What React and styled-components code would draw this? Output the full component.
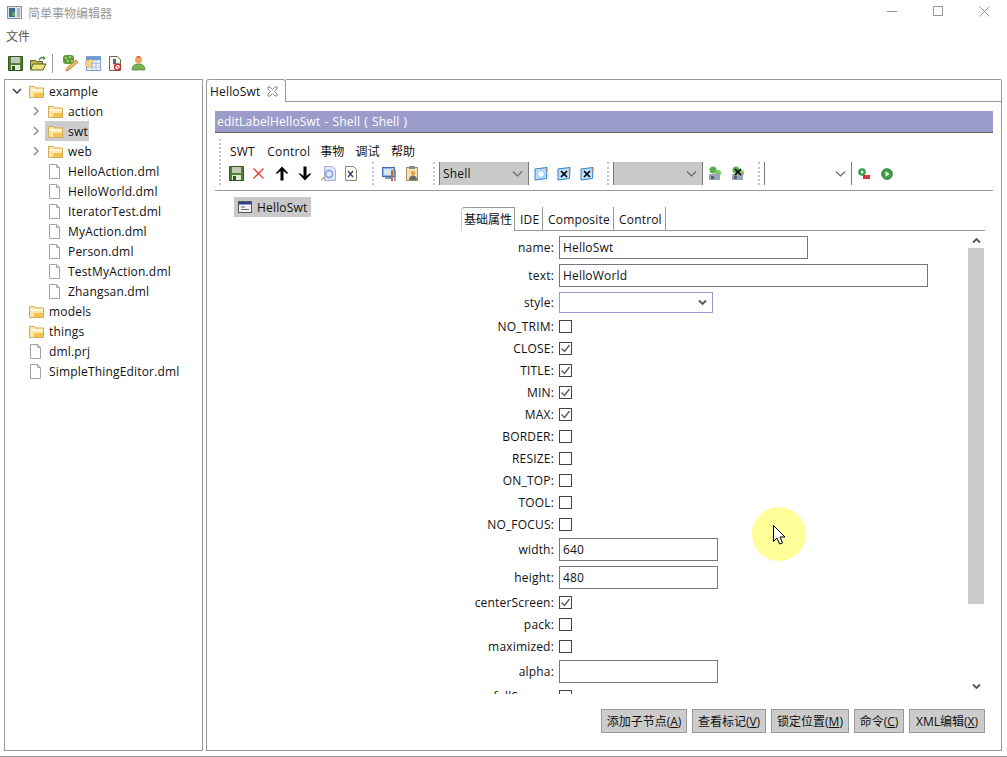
import React from 'react';
import styled, { createGlobalStyle } from 'styled-components';

const Global = createGlobalStyle`
  html, body { margin: 0; padding: 0; background: #fff; }
  body { font-family: "Open Sans", "Noto Sans CJK SC", sans-serif; font-size: 12px; color: #111; letter-spacing: .18px; }
  * { box-sizing: border-box; }
`;

const Win = styled.div`
  position: relative; width: 1007px; height: 757px; overflow: hidden; background: #fff;
  display: flex; flex-direction: column; border-bottom: 1px solid #999;
`;
const TitleBar = styled.div`display: flex; align-items: center; height: 25px; padding-left: 7px; flex: none;`;
const TitleText = styled.div`margin-left: 6px; color: #999; font-size: 12px; flex: 1; letter-spacing: 0;`;
const WinBtn = styled.div`width: 46px; height: 23px; align-self: flex-start; display: flex; align-items: center; justify-content: center;`;
const MenuBar = styled.div`height: 22px; padding-left: 6px; display: flex; align-items: center; color: #555; flex: none; letter-spacing: 0;`;
const AppBar = styled.div`height: 28px; padding-left: 8px; display: flex; align-items: center; flex: none; margin-top: 2px;`;
const AppBtn = styled.div`width: ${p => p.$w}px; flex: none; display: flex; align-items: center; justify-content: flex-start;`;
const AppSep = styled.div`width: 1px; height: 19px; background: #999; margin: 0 9px 0 5px;`;
const Panels = styled.div`display: flex; flex: 1; min-height: 0; padding: 2px 5px 5px 4px; gap: 3px;`;

const TreePanel = styled.div`width: 199px; flex: none; border: 1px solid #999; padding-top: 1px;`;
const TreeRow = styled.div`
  display: flex; align-items: center; height: 20px; padding-left: ${p => p.$depth * 19 + 3}px;
`;
const Chev = styled.div`width: 17px; height: 20px; flex: none; display: flex; align-items: center; justify-content: center;`;
const TreeNode = styled.div`
  display: flex; align-items: center; height: 20px; margin-left: 1px; padding: 0 1px 0 3px; white-space: nowrap;
  background: ${p => p.$sel ? '#cccccc' : 'transparent'};
`;
const TreeIcon = styled.div`width: 20px; flex: none; display: flex; align-items: center;`;

const EditorPanel = styled.div`flex: 1; min-width: 0; display: flex; flex-direction: column;`;
const TabStrip = styled.div`display: flex; height: 23px; flex: none;`;
const EditorTab = styled.div`
  width: 80px; border: 1px solid #999; border-bottom: none; border-radius: 3px 3px 0 0;
  display: flex; align-items: center; padding-left: 3px; gap: 7px;
`;
const TabFill = styled.div`flex: 1; border: 1px solid #999; border-left: none; border-radius: 0 2px 0 0;`;
const Body = styled.div`
  flex: 1; min-height: 0; border: 1px solid #999; border-top: none;
  padding: 9px 8px 17px 8px; display: flex; flex-direction: column;
`;
const Banner = styled.div`
  height: 22px; flex: none; background: #9c9ccb; border-bottom: 1px solid #666;
  color: #fff; display: flex; align-items: center; padding-left: 2px; word-spacing: .7px; white-space: pre;
`;
const ToolArea = styled.div`
  height: 58px; flex: none; padding: 6px 0 5px 4px; display: flex; border-bottom: 1px solid #999;
`;
const Grip = styled.div`width: 2px; flex: none; border-left: 2px dotted #c4c4c4;`;
const ToolCol = styled.div`margin-left: 4px; display: flex; flex-direction: column;`;
const ToolMenu = styled.div`display: flex; height: 23px; align-items: center; padding: 1px 0 0 5px; gap: 11px;`;
const ToolMenuItem = styled.span`margin-right: ${p => p.$extra || 0}px;`;
const ToolRow = styled.div`display: flex; height: 23px; align-items: stretch;`;
const ToolBtn = styled.div`
  width: 23px; flex: none; display: flex; align-items: center; justify-content: center;
  padding-right: ${p => p.$nudge || 0}px;
`;
const ToolSep = styled.div`width: 15px; flex: none; display: flex; justify-content: flex-end; padding-right: 4px;`;
const Combo = styled.div`
  width: ${p => p.$w}px; flex: none; display: flex; align-items: center; justify-content: space-between;
  background: ${p => p.$plain ? '#fff' : '#c9c9c9'}; border-left: 1px solid #777; border-right: 1px solid #777;
  padding: 0 5px 0 3px;
`;

const Editor = styled.div`flex: 1; min-height: 0; display: flex;`;
const Outline = styled.div`width: 246px; flex: none; padding: 6px 0 0 19px;`;
const OutlineItem = styled.div`
  width: 77px; height: 20px; background: #c9c9c9; display: flex; align-items: center; padding-left: 4px; gap: 5px;
`;
const FormWrap = styled.div`width: 524px; flex: none; padding-top: 16px;`;
const FormTabs = styled.div`display: flex; height: 24px; border-bottom: 1px solid #999; align-items: flex-start;`;
const FormTab = styled.div`
  padding: 1px 0 0 ${p => p.$active ? 2 : 5}px; height: ${p => p.$active ? 24 : 23}px;
  width: ${p => p.$w}px; line-height: 23px; white-space: nowrap; flex: none;
  border-right: 1px solid #999; background: #fff;
  ${p => p.$active && 'border-top: 1px solid #999; border-left: 1px solid #ccc; border-radius: 4px 0 0 0; letter-spacing: 0; padding-top: 0;'}
`;
const Scroller = styled.div`display: flex; height: 461px; margin-top: 2px; overflow: hidden;`;
const Fields = styled.div`width: 507px; flex: none;`;
const Row = styled.div`display: flex; align-items: center; height: ${p => p.$h}px;`;
const Label = styled.div`width: 93px; margin-right: 5px; text-align: right; white-space: nowrap;`;
const TextInput = styled.input`
  width: ${p => p.$w}px; height: 23px; border: 1px solid #777; padding: 0 3px; outline: none;
  font: inherit; letter-spacing: inherit; color: #111; background: #fff; border-radius: 0;
`;
const StyleCombo = styled.div`
  width: 154px; height: 21px; border: 1px solid #9a9ad2; display: flex; align-items: center;
  justify-content: flex-end; padding-right: 5px;
`;
const Check = styled.div`
  width: 13px; height: 13px; border: 1px solid #444; display: flex; align-items: center; justify-content: center; background: #fff;
`;
const ScrollBar = styled.div`width: 16px; flex: none; display: flex; flex-direction: column;`;
const ScrollCap = styled.div`height: 15px; flex: none; display: flex; align-items: center; justify-content: center;`;
const ScrollThumb = styled.div`height: 356px; background: #cccccc; flex: none;`;
const ScrollTrack = styled.div`flex: 1; display: flex; flex-direction: column; justify-content: flex-end;`;
const Actions = styled.div`display: flex; justify-content: flex-end; gap: 5px; flex: none; height: 24px; padding-right: 8px; letter-spacing: 0;`;
const Action = styled.div`
  width: ${p => p.$w}px; height: 24px; border: 1px solid #999; background: #ccc;
  display: flex; align-items: center; justify-content: center; white-space: nowrap;
  u { text-decoration: underline; }
`;
const Spot = styled.div`
  position: absolute; left: 752px; top: 507px; width: 54px; height: 54px; border-radius: 50%; background: #ffff99;
  display: flex; align-items: center; justify-content: center;
`;

const Chevron = ({ open, c = '#888' }) => (
  <svg width="10" height="10" viewBox="0 0 10 10" fill="none" stroke={c} strokeWidth="1.4">
    {open ? <path d="M1 3l4 4 4-4" stroke="#333" /> : <path d="M3 1l4 4-4 4" />}
  </svg>
);
const Folder = () => (
  <svg width="15" height="13" viewBox="0 0 15 13">
    <path d="M.5 1.5h5l1 1.5h8v9.5H.5z" fill="#fbe6a4" stroke="#d0ab5a" />
    <rect x="2" y="4" width="11.5" height="2" fill="#fff7de" />
    <path d="M5 8h9v4H5z" fill="#f4c24e" />
  </svg>
);
const FileI = () => (
  <svg width="13" height="15" viewBox="0 0 13 15" fill="#fff" stroke="#a3a3a3">
    <path d="M1.5.5h7l3 3v11h-10z" /><path d="M8.5.5v3h3" fill="none" />
  </svg>
);
const Disk = () => (
  <svg width="15" height="15" viewBox="0 0 15 15">
    <path d="M.5.5h14v14H.5z" fill="#4e8132" stroke="#33561f" />
    <rect x="3" y="1" width="9" height="6" fill="#c6c6bd" />
    <rect x="3" y="9" width="9" height="5" fill="#dfe8d3" />
    <rect x="4" y="10" width="3" height="4" fill="#33561f" />
  </svg>
);
const OpenFolder = () => (
  <svg width="17" height="15" viewBox="0 0 17 15">
    <path d="M.5 4.5h5l1 1h6v8H.5z" fill="#c9b44a" stroke="#54602a" />
    <path d="M3 8h13l-3 6H.5z" fill="#eee27a" stroke="#54602a" />
    <path d="M9 4c1-2 3-3 5-2" fill="none" stroke="#4a8a3a" strokeWidth="1.3" />
    <path d="M13 0l3 2-3 2z" fill="#4a8a3a" />
  </svg>
);
const Wand = () => (
  <svg width="17" height="17" viewBox="0 0 17 17">
    <rect x="1" y="0" width="11" height="9" rx="3" fill="#5d9a3a" />
    <path d="M3 2h2v2H3zM7 1h2v2H7zM5 5h2v2H5zM9 5h2v2H9z" fill="#a9d06f" />
    <path d="M14 5l2 2-9 8-3 1 1-3z" fill="#eec05a" stroke="#b07a30" strokeWidth=".8" />
  </svg>
);
const TableHand = () => (
  <svg width="16" height="15" viewBox="0 0 16 15">
    <rect x="1.500" y=".5" width="14" height="14" fill="#eef3fb" stroke="#7f9dc6" />
    <rect x="2" y="1" width="13" height="3" fill="#6e9ad6" />
    <path d="M7 4v10M11 4v10M2 7.500h13M2 11h13" stroke="#a9c0e0" />
    <path d="M0 6l6-3 3 2-3 2 1 3-4 2-3-3z" fill="#f4d57e" stroke="#c9a24a" strokeWidth=".5" />
  </svg>
);
const DocNo = () => (
  <svg width="13" height="15" viewBox="0 0 13 15">
    <path d="M.5.5h8l3 3v11H.5z" fill="#fbf6e2" stroke="#6b6b52" />
    <path d="M4 3h3v5H4z" fill="#4a6a9e" />
    <circle cx="8.5" cy="11" r="3" fill="#fff" stroke="#cc2030" strokeWidth="1.3" />
    <path d="M6.5 9l4 4" stroke="#cc2030" />
  </svg>
);
const Person = () => (
  <svg width="15" height="15" viewBox="0 0 15 15">
    <circle cx="7.5" cy="4" r="3.5" fill="#f4a45a" />
    <path d="M5 2h5l-1-2H6z" fill="#e8702a" />
    <path d="M1 14c0-4 2-6 6.500-6s6.500 2 6.500 6z" fill="#76b255" stroke="#4a7d33" strokeWidth=".7" />
  </svg>
);
const RedX = () => (
  <svg width="13" height="13" viewBox="0 0 13 13" stroke="#e8402a" strokeWidth="1.3"><path d="M1.500 1.500l10 10M11.500 1.500l-10 10" /></svg>
);
const Arrow = ({ down }) => (
  <svg width="14" height="15" viewBox="0 0 14 15" style={down ? { transform: 'rotate(180deg)' } : undefined}>
    <path d="M7 .5L13.500 7.500 11.500 7.500 8.500 5 8.500 14.500 5.500 14.500 5.500 5 2.500 7.500.5 7.500z" fill="#000" />
  </svg>
);
const DocSwirl = () => (
  <svg width="15" height="15" viewBox="0 0 15 15">
    <path d="M3.500.5h8l3 3v11h-11z" fill="#dfe6f8" stroke="#a9b2d0" />
    <circle cx="8" cy="8" r="3.500" fill="none" stroke="#7d9ee0" strokeWidth="1.500" />
    <path d="M0 14l4-3" stroke="#d99a5a" strokeWidth="1.500" />
  </svg>
);
const DocX = () => (
  <svg width="12" height="15" viewBox="0 0 12 15">
    <path d="M.5.5h8l3 3v11H.5z" fill="#fbfaf0" stroke="#8a8a70" />
    <path d="M3 5l5 6M8 5l-5 6" stroke="#223a70" strokeWidth="1.200" />
  </svg>
);
const MonitorTools = () => (
  <svg width="15" height="15" viewBox="0 0 15 15">
    <rect x=".5" y="1.500" width="12" height="9" fill="#8fb7e6" stroke="#3d6fb0" />
    <rect x="2" y="3" width="9" height="6" fill="#d9e8f8" />
    <rect x="3" y="11" width="7" height="2" fill="#7f9ac0" />
    <path d="M10 4v11" stroke="#d8602a" strokeWidth="2" />
    <path d="M13 4v11" stroke="#5a84c8" strokeWidth="1.500" />
  </svg>
);
const ClipPerson = () => (
  <svg width="13" height="15" viewBox="0 0 13 15">
    <rect x=".5" y="1.500" width="11" height="13" fill="#f3e2b8" stroke="#a89360" />
    <rect x="3" y="0" width="6" height="3" fill="#8a8a8a" />
    <circle cx="7" cy="7" r="2.200" fill="#efa040" />
    <path d="M3 14c0-3 1.500-4.500 4-4.500s4 1.500 4 4.500z" fill="#6b6b6b" />
  </svg>
);
const BlueWin = ({ x }) => (
  <svg width="14" height="14" viewBox="0 0 14 14">
    <path d="M1 2l12-1.500-.5 11L1 13z" fill="#bfe0fa" stroke="#2f7fd0" />
    {x ? <path d="M4 4l6 6M10 4l-6 6" stroke="#000" strokeWidth="1.700" />
      : <circle cx="7" cy="7" r="3.500" fill="#f2fbff" stroke="#8cc4ee" />}
    <circle cx="12.500" cy="3" r="1" fill="#e86a3a" />
  </svg>
);
const Puzzle = ({ x }) => (
  <svg width="14" height="15" viewBox="0 0 14 15">
    <circle cx="5" cy="4" r="3.500" fill="#58b04a" />
    <circle cx="10" cy="7" r="3" fill="#7cc85e" />
    <rect x="1" y="8" width="11" height="6" fill="#9aa4b8" />
    <rect x="3" y="10" width="3" height="3" fill="#56607a" />
    {x && <path d="M4 3l6 6M10 3l-6 6" stroke="#000" strokeWidth="1.700" />}
  </svg>
);
const PlayStop = () => (
  <svg width="12" height="12" viewBox="0 0 12 12">
    <circle cx="4" cy="4" r="3.800" fill="#3c9a44" />
    <path d="M3 2l3 2-3 2z" fill="#fff" />
    <rect x="5" y="7" width="7" height="4" fill="#d8343a" />
  </svg>
);
const Play = () => (
  <svg width="12" height="12" viewBox="0 0 12 12">
    <circle cx="6" cy="6" r="5.500" fill="#3c9a44" stroke="#2b7434" strokeWidth=".6" />
    <path d="M4.500 3l4 3-4 3z" fill="#e6f6d6" />
  </svg>
);
const ShellIcon = () => (
  <svg width="14" height="12" viewBox="0 0 14 12">
    <rect x=".5" y=".5" width="13" height="11" fill="#f4f4f4" stroke="#555" />
    <rect x="1" y="1" width="12" height="2.500" fill="#2d3f90" />
    <path d="M3 6h4M3 8.500h8" stroke="#666" />
  </svg>
);
const AppGlyph = () => (
  <svg width="15" height="13" viewBox="0 0 15 13">
    <rect x=".5" y=".5" width="14" height="12" fill="#dfe3ea" stroke="#8a8f99" />
    <rect x="2" y="2" width="6" height="9" fill="#3f6f8f" />
    <rect x="5" y="6" width="3" height="4" fill="#6fa06a" />
    <rect x="10" y="2" width="3" height="9" fill="#a9b6c8" />
  </svg>
);
const TabClose = () => (
  <svg width="11" height="11" viewBox="0 0 11 11" fill="none" stroke="#888">
    <path d="M1 1h2l2.500 2.500L8 1h2v2L7.500 5.500 10 8v2H8L5.500 7.500 3 10H1V8l2.500-2.500L1 3z" />
  </svg>
);
const Tick = () => (
  <svg width="11" height="11" viewBox="0 0 11 11" fill="none" stroke="#555" strokeWidth="1.300"><path d="M1.500 5.500L4.500 8.500 9.500 2" /></svg>
);
const Cursor = () => (
  <svg width="14" height="21" viewBox="0 0 14 21" style={{ marginLeft: 2, marginTop: 2 }}>
    <path d="M.5.5v16l3.500-3.500 2.500 6 3-1-2.500-6h5z" fill="#fff" stroke="#000" />
  </svg>
);
const SmallChev = ({ c = '#666' }) => (
  <svg width="11" height="8" viewBox="0 0 11 8" fill="none" stroke={c} strokeWidth="1.100"><path d="M1 1.500l4.500 4.500L10 1.500" /></svg>
);
const BoldChev = ({ up }) => (
  <svg width="9" height="7" viewBox="0 0 9 7" fill="none" stroke="#555" strokeWidth="1.800" style={up ? { transform: 'rotate(180deg)' } : undefined}><path d="M1 1.500l3.500 3.500L8 1.500" /></svg>
);

const tree = [
  { n: 'example', d: 0, k: 'f', c: 'open' },
  { n: 'action', d: 1, k: 'f', c: 'closed' },
  { n: 'swt', d: 1, k: 'f', c: 'closed', sel: true },
  { n: 'web', d: 1, k: 'f', c: 'closed' },
  { n: 'HelloAction.dml', d: 1, k: 'd' },
  { n: 'HelloWorld.dml', d: 1, k: 'd' },
  { n: 'IteratorTest.dml', d: 1, k: 'd' },
  { n: 'MyAction.dml', d: 1, k: 'd' },
  { n: 'Person.dml', d: 1, k: 'd' },
  { n: 'TestMyAction.dml', d: 1, k: 'd' },
  { n: 'Zhangsan.dml', d: 1, k: 'd' },
  { n: 'models', d: 0, k: 'f' },
  { n: 'things', d: 0, k: 'f' },
  { n: 'dml.prj', d: 0, k: 'd' },
  { n: 'SimpleThingEditor.dml', d: 0, k: 'd' },
];

const fields = [
  { l: 'name', t: 'input', v: 'HelloSwt', w: 249, h: 28 },
  { l: 'text', t: 'input', v: 'HelloWorld', w: 369, h: 28 },
  { l: 'style', t: 'combo', h: 26 },
  { l: 'NO_TRIM', t: 'check' },
  { l: 'CLOSE', t: 'check', on: true },
  { l: 'TITLE', t: 'check', on: true },
  { l: 'MIN', t: 'check', on: true },
  { l: 'MAX', t: 'check', on: true },
  { l: 'BORDER', t: 'check' },
  { l: 'RESIZE', t: 'check' },
  { l: 'ON_TOP', t: 'check' },
  { l: 'TOOL', t: 'check' },
  { l: 'NO_FOCUS', t: 'check' },
  { l: 'width', t: 'input', v: '640', w: 159, h: 28 },
  { l: 'height', t: 'input', v: '480', w: 159, h: 28 },
  { l: 'centerScreen', t: 'check', on: true },
  { l: 'pack', t: 'check' },
  { l: 'maximized', t: 'check' },
  { l: 'alpha', t: 'input', v: '', w: 159, h: 28 },
  { l: 'fullScreen', t: 'check' },
];

export default function App() {
  return (
    <Win>
      <Global />
      <TitleBar>
        <AppGlyph />
        <TitleText>简单事物编辑器</TitleText>
        <WinBtn><svg width="11" height="11" stroke="#999"><path d="M0 5.500h10" /></svg></WinBtn>
        <WinBtn><svg width="11" height="11" fill="none" stroke="#999"><rect x=".5" y=".5" width="9" height="9" /></svg></WinBtn>
        <WinBtn><svg width="11" height="11" stroke="#999"><path d="M.5.5l10 10M10.500.5l-10 10" /></svg></WinBtn>
      </TitleBar>
      <MenuBar>文件</MenuBar>
      <AppBar>
        <AppBtn $w={22}><Disk /></AppBtn>
        <AppBtn $w={17}><OpenFolder /></AppBtn>
        <AppSep />
        <AppBtn $w={23}><Wand /></AppBtn>
        <AppBtn $w={24}><TableHand /></AppBtn>
        <AppBtn $w={22}><DocNo /></AppBtn>
        <AppBtn $w={22}><Person /></AppBtn>
      </AppBar>
      <Panels>
        <TreePanel>
          {tree.map(i => (
            <TreeRow key={i.n} $depth={i.d}>
              <Chev>{i.c && <Chevron open={i.c === 'open'} />}</Chev>
              <TreeNode $sel={i.sel}>
                <TreeIcon>{i.k === 'f' ? <Folder /> : <FileI />}</TreeIcon>
                {i.n}
              </TreeNode>
            </TreeRow>
          ))}
        </TreePanel>
        <EditorPanel>
          <TabStrip>
            <EditorTab>HelloSwt<TabClose /></EditorTab>
            <TabFill />
          </TabStrip>
          <Body>
            <Banner>editLabelHelloSwt - Shell ( Shell )</Banner>
            <ToolArea>
              <Grip />
              <ToolCol>
                <ToolMenu>
                  <ToolMenuItem $extra={1.5}>SWT</ToolMenuItem>
                  <ToolMenuItem $extra={-1}>Control</ToolMenuItem>
                  <ToolMenuItem>事物</ToolMenuItem>
                  <ToolMenuItem>调试</ToolMenuItem>
                  <ToolMenuItem>帮助</ToolMenuItem>
                </ToolMenu>
                <ToolRow>
                  <ToolBtn><Disk /></ToolBtn>
                  <ToolBtn $nudge={2}><RedX /></ToolBtn>
                  <ToolBtn $nudge={2}><Arrow /></ToolBtn>
                  <ToolBtn $nudge={2}><Arrow down /></ToolBtn>
                  <ToolBtn><DocSwirl /></ToolBtn>
                  <ToolBtn $nudge={2}><DocX /></ToolBtn>
                  <ToolSep><Grip /></ToolSep>
                  <ToolBtn><MonitorTools /></ToolBtn>
                  <ToolBtn><ClipPerson /></ToolBtn>
                  <ToolSep><Grip /></ToolSep>
                  <Combo $w={90}>Shell<SmallChev /></Combo>
                  <ToolBtn><BlueWin /></ToolBtn>
                  <ToolBtn><BlueWin x /></ToolBtn>
                  <ToolBtn><BlueWin x /></ToolBtn>
                  <ToolSep><Grip /></ToolSep>
                  <Combo $w={90}><span /><SmallChev /></Combo>
                  <ToolBtn><Puzzle /></ToolBtn>
                  <ToolBtn><Puzzle x /></ToolBtn>
                  <ToolSep><Grip /></ToolSep>
                  <Combo $w={88} $plain><span /><SmallChev /></Combo>
                  <ToolBtn><PlayStop /></ToolBtn>
                  <ToolBtn><Play /></ToolBtn>
                </ToolRow>
              </ToolCol>
            </ToolArea>
            <Editor>
              <Outline>
                <OutlineItem><ShellIcon />HelloSwt</OutlineItem>
              </Outline>
              <FormWrap>
                <FormTabs>
                  <FormTab $active $w={54}>基础属性</FormTab>
                  <FormTab $w={28}>IDE</FormTab>
                  <FormTab $w={71}>Composite</FormTab>
                  <FormTab $w={52}>Control</FormTab>
                </FormTabs>
                <Scroller>
                  <Fields>
                    {fields.map(f => (
                      <Row key={f.l} $h={f.h || 22}>
                        <Label>{f.l}:</Label>
                        {f.t === 'input' && <TextInput $w={f.w} defaultValue={f.v} readOnly />}
                        {f.t === 'combo' && <StyleCombo><BoldChev /></StyleCombo>}
                        {f.t === 'check' && <Check>{f.on && <Tick />}</Check>}
                      </Row>
                    ))}
                  </Fields>
                  <ScrollBar>
                    <ScrollCap><BoldChev up /></ScrollCap>
                    <ScrollThumb />
                    <ScrollTrack><ScrollCap><BoldChev /></ScrollCap></ScrollTrack>
                  </ScrollBar>
                </Scroller>
              </FormWrap>
            </Editor>
            <Actions>
              <Action $w={86}>添加子节点(<u>A</u>)</Action>
              <Action $w={74}>查看标记(<u>V</u>)</Action>
              <Action $w={78}>锁定位置(<u>M</u>)</Action>
              <Action $w={50}>命令(<u>C</u>)</Action>
              <Action $w={76}>XML编辑(<u>X</u>)</Action>
            </Actions>
          </Body>
        </EditorPanel>
      </Panels>
      <Spot><Cursor /></Spot>
    </Win>
  );
}
